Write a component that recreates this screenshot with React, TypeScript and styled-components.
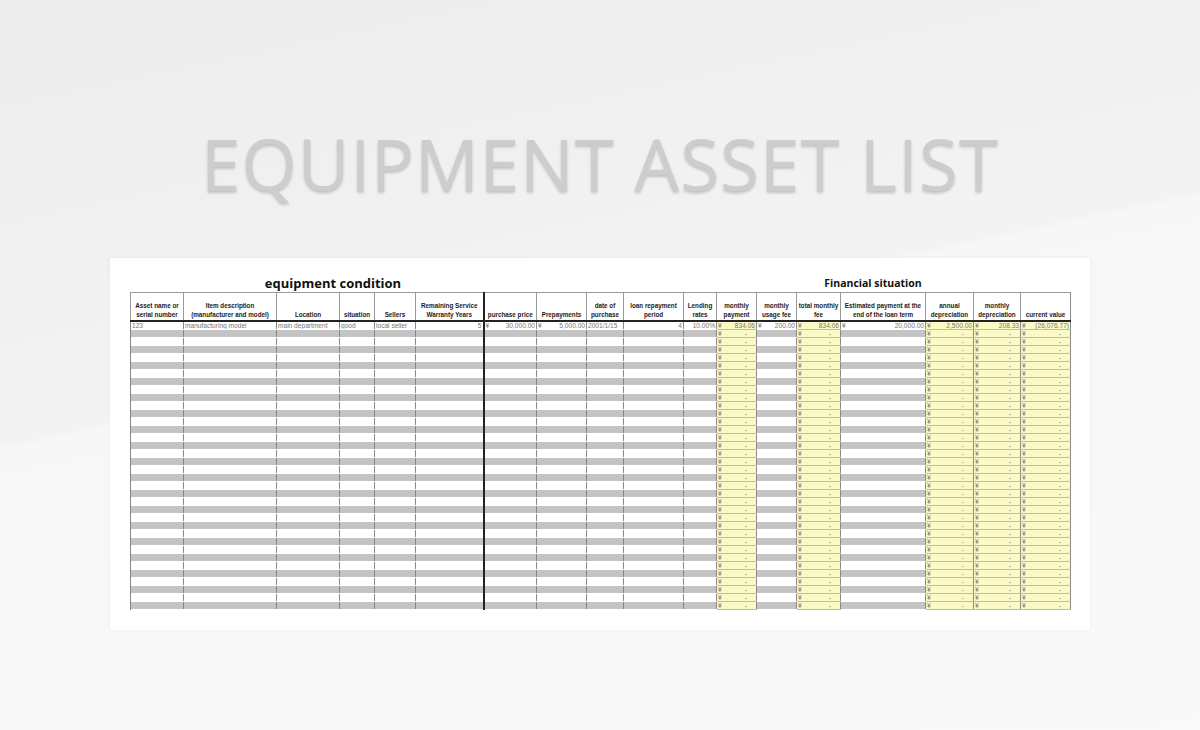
import React from "react";
import styled, { createGlobalStyle } from "styled-components";

const Global = createGlobalStyle`
  html, body { margin: 0; padding: 0; }
  body { width: 1200px; height: 730px; overflow: hidden; font-family: "Open Sans", "Liberation Sans", sans-serif; }
`;

const Page = styled.div`
  width: 1200px; height: 730px;
  background: linear-gradient(168deg, #ececec 0%, #f3f3f3 45%, #f7f7f7 46%, #f9f9f9 100%);
  display: flex; flex-direction: column; align-items: center;
`;
const Title = styled.h1`
  margin: 124px 0 0; height: 80px; line-height: 80px;
  font-family: "Open Sans", sans-serif; font-weight: 400; font-size: 71px;
  letter-spacing: 1px; color: #cdcdcd;
  text-shadow: 0 2px 3px rgba(0,0,0,0.2);
`;
const Card = styled.div`
  margin-top: 54px; width: 980px; height: 372px; background: #fff;
  box-shadow: 0 0 3px rgba(0,0,0,0.06);
  padding: 14px 20px 0; box-sizing: border-box;
`;
const Sections = styled.div`
  display: grid; grid-template-columns: 406px 534px; height: 20px; align-items: end;
`;
const SecTitle = styled.div<{ $size: number; $pad?: number }>`
  text-align: center; font-weight: 700; font-size: ${p => p.$size}px; color: #111;
  line-height: 18px; padding-left: ${p => p.$pad || 0}px;
`;
const Table = styled.table`
  border-collapse: collapse; table-layout: fixed; width: 940px;
  font-family: "Liberation Sans", sans-serif; color: #222;
  border-right: 1px solid #888;
`;
const Th = styled.th<{ $thick?: boolean }>`
  font-size: 6.3px; font-weight: 700; height: 26px; padding: 0 1px 1px;
  vertical-align: bottom; text-align: center; line-height: 8.5px;
  border-left: ${p => (p.$thick ? "2px solid #222" : "1px solid #999")};
  border-top: 1px solid #999;
  border-bottom: 2px solid #222;
  white-space: normal; overflow: hidden;
`;
const Td = styled.td<{ $bg: string; $thick?: boolean }>`
  height: 7px; padding: 0 1px; font-size: 6.6px; line-height: 7px; color: #777;
  background: ${p => p.$bg};
  border-left: ${p => (p.$thick ? "2px solid #222" : "1px solid #888")};
  border-bottom: ${p => (p.$bg === "#fbfac6" ? "1px solid #bbb" : "1px solid transparent")};
  white-space: nowrap; overflow: hidden;
`;
const Money = styled.span`
  display: flex; justify-content: space-between;
`;
const Dash = styled.span`
  padding-right: 8px;
`;

const cols = [
  { w: 53, h: "Asset name or serial number" },
  { w: 93, h: "Item description (manufacturer and model)" },
  { w: 63, h: "Location" },
  { w: 35, h: "situation" },
  { w: 41, h: "Sellers" },
  { w: 68, h: "Remaining Service Warranty Years" },
  { w: 53, h: "purchase price", thick: true },
  { w: 50, h: "Prepayments" },
  { w: 37, h: "date of purchase" },
  { w: 60, h: "loan repayment period" },
  { w: 33, h: "Lending rates" },
  { w: 40, h: "monthly payment", y: true },
  { w: 40, h: "monthly usage fee" },
  { w: 44, h: "total monthly fee", y: true },
  { w: 85, h: "Estimated payment at the end of the loan term" },
  { w: 48, h: "annual depreciation", y: true },
  { w: 47, h: "monthly depreciation", y: true },
  { w: 50, h: "current value", y: true },
];

const m = (a: string, b: string) => <Money><span>{a}</span><span>{b}</span></Money>;
const first: React.ReactNode[] = [
  "123", "manufacturing model", "main department", "good", "local seller",
  m("", "5"), m("¥", "30,000.00"), m("¥", "5,000.00"), "2001/1/15", m("", "4"),
  m("", "10.00%"), m("¥", "834.06"), m("¥", "200.00"), m("¥", "834.06"),
  m("¥", "20,000.00"), m("¥", "2,500.00"), m("¥", "208.33"), m("¥", "(26,076.77)"),
];

const ROWS = 36;

export default function App() {
  return (
    <Page>
      <Global />
      <Title>EQUIPMENT ASSET LIST</Title>
      <Card>
        <Sections>
          <SecTitle $size={13}>equipment condition</SecTitle>
          <SecTitle $size={10.5} $pad={140}>Financial situation</SecTitle>
        </Sections>
        <Table>
          <colgroup>
            {cols.map((c, i) => <col key={i} style={{ width: c.w }} />)}
          </colgroup>
          <thead>
            <tr>
              {cols.map((c, i) => <Th key={i} $thick={c.thick}>{c.h}</Th>)}
            </tr>
          </thead>
          <tbody>
            {Array.from({ length: ROWS }).map((_, r) => (
              <tr key={r}>
                {cols.map((c, i) => {
                  const bg = c.y ? "#fbfac6" : r % 2 === 1 ? "#c4c4c4" : "#fff";
                  let content: React.ReactNode = null;
                  if (r === 0) content = first[i];
                  else if (c.y) content = <Money><span>¥</span><Dash>-</Dash></Money>;
                  return <Td key={i} $bg={bg} $thick={c.thick}>{content}</Td>;
                })}
              </tr>
            ))}
          </tbody>
        </Table>
      </Card>
    </Page>
  );
}
